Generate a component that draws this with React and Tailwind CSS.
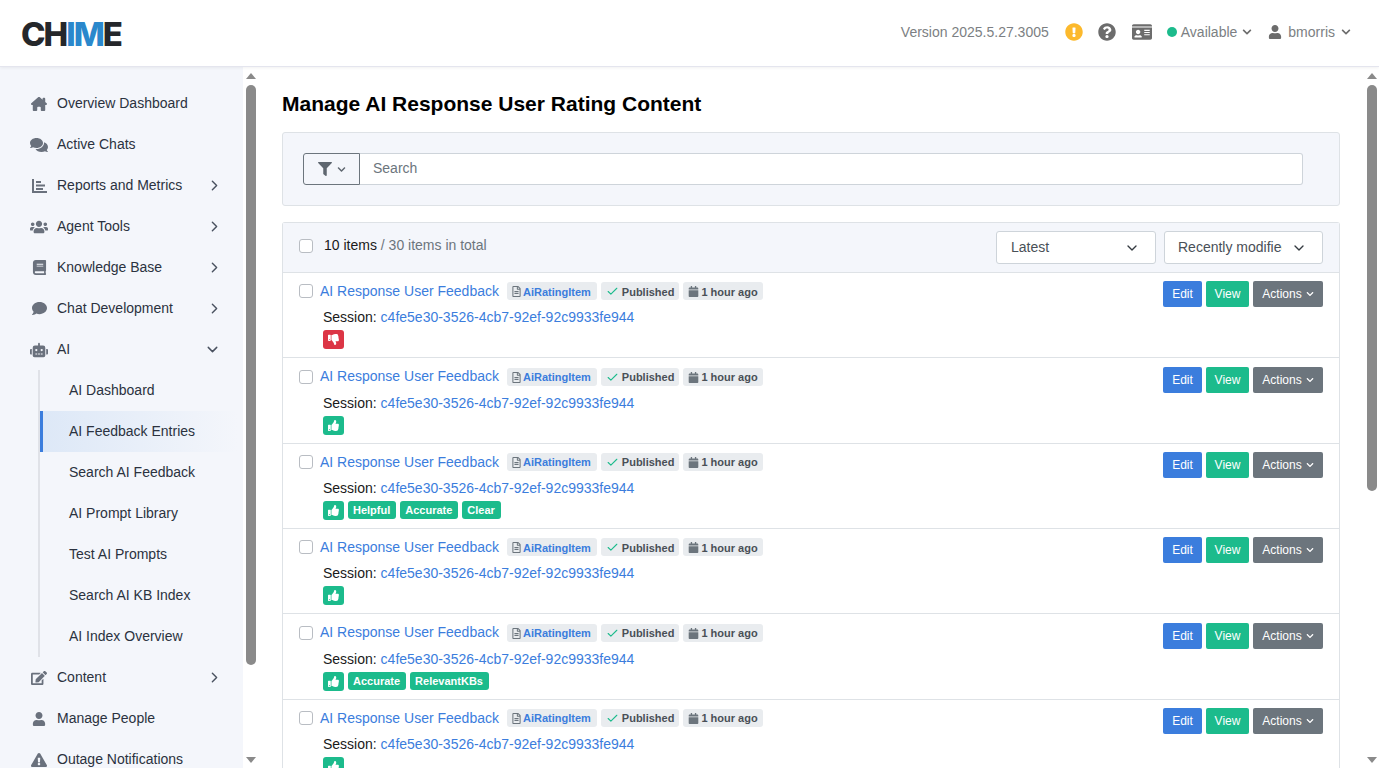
import { Check, ChevronDown, ChevronRight } from "lucide-react"
import {
  FaBook,
  FaCalendar,
  FaChevronDown,
  FaComment,
  FaComments,
  FaEdit,
  FaExclamationCircle,
  FaExclamationTriangle,
  FaFilter,
  FaIdCard,
  FaQuestionCircle,
  FaRegFileAlt,
  FaRobot,
  FaThumbsDown,
  FaThumbsUp,
  FaUser,
  FaUsers,
} from "react-icons/fa"
import { FaHouseChimney } from "react-icons/fa6"

// horizontal bars on an L axis, the package's chart-bar has upright bars
function BarsIcon() {
  return (
    <svg width="15" height="14" viewBox="0 0 15 14" fill="currentColor">
      <rect x="0" y="0" width="2" height="14" />
      <rect x="0" y="12" width="15" height="2" />
      <rect x="4" y="2" width="5" height="2" />
      <rect x="4" y="5.5" width="9" height="2" />
      <rect x="4" y="9" width="7" height="2" />
    </svg>
  )
}

const navTop = [
  { icon: FaHouseChimney, size: 16, label: "Overview Dashboard" },
  { icon: FaComments, size: 18, label: "Active Chats" },
  { icon: BarsIcon, label: "Reports and Metrics", arrow: true },
  { icon: FaUsers, size: 18, label: "Agent Tools", arrow: true },
  { icon: FaBook, size: 15, label: "Knowledge Base", arrow: true },
  { icon: FaComment, size: 15, label: "Chat Development", arrow: true },
]

const aiLinks = [
  "AI Dashboard",
  "AI Feedback Entries",
  "Search AI Feedback",
  "AI Prompt Library",
  "Test AI Prompts",
  "Search AI KB Index",
  "AI Index Overview",
]

const navBottom = [
  { icon: FaEdit, size: 16, label: "Content", arrow: true },
  { icon: FaUser, size: 14, label: "Manage People" },
  { icon: FaExclamationTriangle, size: 16, label: "Outage Notifications" },
]

const rows = [
  { bad: true, tags: [] },
  { tags: [] },
  { tags: ["Helpful", "Accurate", "Clear"] },
  { tags: [] },
  { tags: ["Accurate", "RelevantKBs"] },
  { tags: [] },
]

function NavItem({ item }) {
  const Icon = item.icon
  return (
    <div className="h-[41px] flex items-center pl-[30px] pr-[20px] text-[14px] text-[#2b3240]">
      <span className="w-[18px] mr-[9px] flex justify-center text-[#6a717d]">
        <Icon size={item.size} />
      </span>
      <span className="flex-1">{item.label}</span>
      {item.arrow && <ChevronRight size={17} className="text-[#4a5260]" />}
    </div>
  )
}

function Sidebar() {
  return (
    <aside className="w-[243px] shrink-0 bg-[#f4f6fb] pt-[16px] overflow-hidden">
      {navTop.map((item) => (
        <NavItem key={item.label} item={item} />
      ))}
      <div className="h-[41px] flex items-center pl-[30px] pr-[22px] text-[14px] text-[#2b3240]">
        <span className="w-[18px] mr-[9px] flex justify-center text-[#6a717d]">
          <FaRobot size={18} />
        </span>
        <span className="flex-1">AI</span>
        <ChevronDown size={17} className="text-[#4a5260]" />
      </div>
      <div className="ml-[38px] mr-[6px] border-l-2 border-[#e0e2e8]">
        {aiLinks.map((link) =>
          link === "AI Feedback Entries" ? (
            <div
              key={link}
              className="h-[41px] flex items-center pl-[26px] text-[14px] text-[#2b3240] border-l-[3px] border-[#3b7ddd] bg-gradient-to-r from-[#dde8f7] to-[#f4f6fb]"
            >
              {link}
            </div>
          ) : (
            <div key={link} className="h-[41px] flex items-center pl-[29px] text-[14px] text-[#2b3240]">
              {link}
            </div>
          )
        )}
      </div>
      {navBottom.map((item) => (
        <NavItem key={item.label} item={item} />
      ))}
    </aside>
  )
}

function ScrollBar({ thumb }) {
  return (
    <div className="w-[15px] shrink-0 bg-white flex flex-col items-center pt-[6px] pb-[5px]">
      <div className="w-0 h-0 border-x-[5px] border-x-transparent border-b-[6px] border-b-[#8a8a8a]" />
      <div className={`w-[10px] mt-[6px] rounded-full bg-[#8a8a8a] ${thumb}`} />
      <div className="flex-1" />
      <div className="w-0 h-0 border-x-[5px] border-x-transparent border-t-[6px] border-t-[#8a8a8a]" />
    </div>
  )
}

function Row({ row }) {
  return (
    <div className="h-[85.33px] border-t border-[#dee2e6] pl-4 pr-4 pt-[7.4px] flex justify-between">
      <div>
        <div className="flex items-center h-[22px]">
          <input
            type="checkbox"
            className="appearance-none w-[14px] h-[14px] bg-white border border-[#b9bdc3] rounded-[3px] mr-[7px]"
          />
          <a className="text-[14px] text-[#3b7ddd] mr-[8px]">AI Response User Feedback</a>
          <span className="h-[18px] pl-[4px] pr-[6px] pt-[1px] mr-[4px] flex items-center gap-[1px] rounded-[3px] bg-[#e9ecef] text-[11px] font-bold text-[#3b7ddd]">
            <FaRegFileAlt size={11} className="text-[#6c757d]" />
            AiRatingItem
          </span>
          <span className="h-[18px] pl-[5px] pr-[5px] pt-[1px] mr-[4px] flex items-center gap-[3px] rounded-[3px] bg-[#e9ecef] text-[11px] font-bold text-[#495057]">
            <Check size={13} strokeWidth={2} className="text-[#1cbb8c]" />
            Published
          </span>
          <span className="h-[18px] px-[5px] pt-[1px] flex items-center gap-[2px] rounded-[3px] bg-[#e9ecef] text-[11px] font-bold text-[#495057]">
            <FaCalendar size={11} className="text-[#6c757d]" />1 hour ago
          </span>
        </div>
        <div className="pl-[24px] mt-[4.8px] text-[14px] leading-[21px] text-[#1a1a1a]">
          Session: <a className="text-[#3b7ddd]">c4fe5e30-3526-4cb7-92ef-92c9933fe944</a>
        </div>
        <div className="pl-[24px] mt-[2px] flex items-center gap-[4px]">
          <span
            className={`w-[21px] h-[19px] rounded-[3px] flex items-center justify-center text-white ${
              row.bad ? "bg-[#dc3545]" : "bg-[#1cbb8c]"
            }`}
          >
            {row.bad ? <FaThumbsDown size={11} /> : <FaThumbsUp size={11} />}
          </span>
          {row.tags.map((tag) => (
            <span
              key={tag}
              className="h-[18px] pl-[5px] pr-[6px] rounded-[3px] bg-[#1cbb8c] flex items-center text-[11px] font-bold text-white"
            >
              {tag}
            </span>
          ))}
        </div>
      </div>
      <div className="flex gap-[4px] h-[26px] mt-[1px] text-[12px] text-white">
        <button className="w-[39px] rounded-[2px] bg-[#3b7ddd]">Edit</button>
        <button className="w-[43px] rounded-[2px] bg-[#1cbb8c]">View</button>
        <button className="w-[70px] rounded-[2px] bg-[#6c757d] flex items-center justify-center gap-[4px]">
          Actions
          <FaChevronDown size={8} />
        </button>
      </div>
    </div>
  )
}

export default function App() {
  return (
    <div className="h-screen overflow-hidden flex flex-col bg-white font-['Liberation_Sans',Arial,sans-serif]">
      <header className="h-[67px] shrink-0 bg-white border-b border-[#e4e5ee] shadow-[0_1px_3px_rgba(0,0,0,0.06)] flex items-center justify-between pl-[21px] pr-[28px] relative z-10">
        <div className="font-['Inter',sans-serif] text-[33px] font-extrabold tracking-[-2px] leading-none pt-[3px] text-[#25272b]">
          CH<span className="text-[#2a88cc]">IM</span>E
        </div>
        <div className="flex items-center self-start h-[64px] text-[14px] text-[#7c7f83]">
          <span className="mr-[16px]">Version 2025.5.27.3005</span>
          <FaExclamationCircle size={18} className="text-[#fcb92c] mr-[15px]" />
          <FaQuestionCircle size={18} className="text-[#6c6c6c] mr-[16px]" />
          <FaIdCard size={20} className="text-[#6c6c6c] mr-[15px]" />
          <span className="w-[10px] h-[10px] rounded-full bg-[#1cbb8c] mr-[4px]" />
          <span>Available</span>
          <FaChevronDown size={10} className="text-[#6c6c6c] ml-[5px] mr-[16px]" />
          <FaUser size={14} className="text-[#6c6c6c] mr-[6px]" />
          <span>bmorris</span>
          <FaChevronDown size={10} className="text-[#6c6c6c] ml-[6px]" />
        </div>
      </header>

      <div className="flex-1 min-h-0 flex">
        <Sidebar />
        <ScrollBar thumb="h-[580px]" />
        <main className="flex-1 min-w-0 overflow-hidden pl-[24px] pr-[24px] pt-[25px]">
          <h1 className="text-[21px] font-bold leading-[24px] text-black mb-[16px]">
            Manage AI Response User Rating Content
          </h1>

          <div className="h-[74px] border border-[#dee2e6] rounded-[3px] bg-[#f4f6fb] flex items-center pl-[20px] pr-[36px] mb-[16px]">
            <button className="w-[57px] h-[32px] shrink-0 border border-[#6c757d] rounded-l-[3px] flex items-center justify-center gap-[5px] text-[#5f6770]">
              <FaFilter size={14} />
              <FaChevronDown size={9} />
            </button>
            <input
              placeholder="Search"
              className="flex-1 h-[32px] bg-white border border-l-0 border-[#ced4da] rounded-r-[3px] pl-[13px] pr-[13px] pb-[2px] text-[14px] placeholder:text-[#6c757d] outline-none"
            />
          </div>

          <div className="border-x border-t border-[#dee2e6] rounded-t-[3px]">
            <div className="h-[49px] bg-[#f4f6fb] flex items-center justify-between pl-4 pr-4">
              <div className="flex items-center pb-[3px] text-[14px]">
                <input
                  type="checkbox"
                  className="appearance-none w-[14px] h-[14px] bg-white border border-[#b9bdc3] rounded-[3px] mr-[11px]"
                />
                <span className="pb-[2px]">
                  <span className="text-[#1a1a1a]">10 items</span>
                  <span className="text-[#6c757d]">&nbsp;/ 30 items in total</span>
                </span>
              </div>
              <div className="flex gap-[8px] text-[14px] text-[#495057]">
                <div className="w-[160px] h-[33px] bg-white border border-[#ced4da] rounded-[3px] flex items-center justify-between pl-[14px] pr-[15px]">
                  Latest
                  <ChevronDown size={16} className="text-[#343a40]" />
                </div>
                <div className="w-[159px] h-[33px] bg-white border border-[#ced4da] rounded-[3px] flex items-center justify-between pl-[13px] pr-[15px]">
                  <span className="w-[104px] overflow-hidden whitespace-nowrap">Recently modified</span>
                  <ChevronDown size={16} className="text-[#343a40]" />
                </div>
              </div>
            </div>
            {rows.map((row, index) => (
              <Row key={index} row={row} />
            ))}
          </div>
        </main>
        <ScrollBar thumb="h-[406px]" />
      </div>
    </div>
  )
}
